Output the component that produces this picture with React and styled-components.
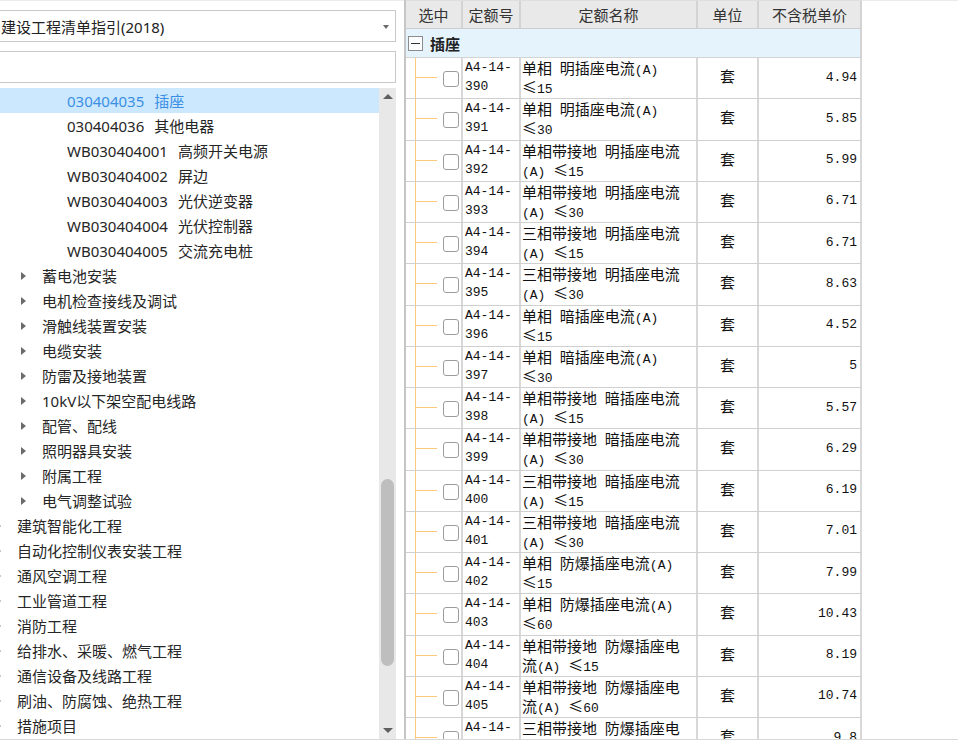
import React from 'react';
import styled, { createGlobalStyle } from 'styled-components';

const GlobalStyle = createGlobalStyle`
  html, body { margin: 0; padding: 0; background: #fff; }
  body { overflow: hidden; font-family: "Noto Sans", "Noto Sans CJK SC", sans-serif; }
  #root { width: 958px; height: 743px; }
  * { box-sizing: border-box; }
`;

const CJK = '"Noto Sans CJK SC", "Noto Sans", sans-serif';
const MONO = '"Liberation Mono", "Noto Sans CJK SC", monospace';
const COLS = '57px 58px 177px 61px 103px';
const GUIDE = '#fbc97e';

const Page = styled.div`
  width: 958px;
  height: 743px;
  overflow: hidden;
  background: #fff;
`;

const Frame = styled.div`
  display: flex;
  height: 740px;
  border-bottom: 1px solid #d9d9d9;
  overflow: hidden;
`;

const LeftPanel = styled.div`
  flex: 0 0 404px;
  display: flex;
  flex-direction: column;
  overflow: hidden;
  border-top: 1px solid #ebebeb;
`;

const Field = styled.div`
  flex: 0 0 32px;
  width: 398px;
  margin: 9px 0 0 -2px;
  border: 1px solid #c9c9c9;
  background: #fff;
  display: flex;
  align-items: center;
  justify-content: space-between;
  padding: 0 6px 0 2px;
  font-family: "Noto Sans", "Noto Sans CJK SC", sans-serif;
  font-size: 15px;
  color: #222;
`;

const ComboArrow = styled.span`
  width: 0;
  height: 0;
  border-left: 3.5px solid transparent;
  border-right: 3.5px solid transparent;
  border-top: 4px solid #6a6a6a;
  margin-top: 1px;
`;

const TreeWrap = styled.div`
  flex: 1;
  margin-top: 5px;
  display: flex;
  overflow: hidden;
  padding-right: 8px;
`;

const TreeViewport = styled.div`
  flex: 0 0 379px;
  overflow: hidden;
`;

const TreeList = styled.div`
  margin-left: -8px;
  width: 387px;
`;

const TreeRow = styled.div`
  height: 25px;
  display: flex;
  align-items: center;
  padding-left: ${(p) => (p.$depth - 1) * 25}px;
  background: ${(p) => (p.$selected ? '#cce8ff' : 'transparent')};
  color: ${(p) => (p.$selected ? '#3b8fe3' : '#262626')};
  font-family: "Noto Sans", "Noto Sans CJK SC", sans-serif;
  font-size: 15px;
  white-space: nowrap;
`;

const Expander = styled.span`
  flex: 0 0 25px;
  height: 25px;
  display: flex;
  align-items: center;
  padding-left: 4px;
  &::before {
    content: '';
    display: ${(p) => (p.$leaf ? 'none' : 'block')};
    width: 0;
    height: 0;
    border-top: 4px solid transparent;
    border-bottom: 4px solid transparent;
    border-left: 5px solid #6b6b6b;
  }
`;

const ItemCode = styled.span`
  margin-right: 10px;
`;

const Scrollbar = styled.div`
  flex: 0 0 17px;
  display: flex;
  flex-direction: column;
  background: #e8e8e8;
`;

const ScrollBtn = styled.div`
  flex: 0 0 17px;
  display: flex;
  align-items: center;
  justify-content: center;
  &::before {
    content: '';
    width: 0;
    height: 0;
    border-left: 5px solid transparent;
    border-right: 5px solid transparent;
    ${(p) => (p.$down ? 'border-top: 5px solid #5f5f5f;' : 'border-bottom: 5px solid #5f5f5f;')}
  }
`;

const Track = styled.div`
  flex: 1;
  display: flex;
  flex-direction: column;
  align-items: center;
`;

const Thumb = styled.div`
  width: 13px;
  border-radius: 7px;
  background: #bebebe;
`;

const TablePanel = styled.div`
  flex: 0 0 458px;
  border-left: 2px solid #c6c6c6;
  overflow: hidden;
  display: flex;
  flex-direction: column;
`;

const Filler = styled.div`
  flex: 1;
  border-top: 1px solid #ebebeb;
`;

const HeaderRow = styled.div`
  display: grid;
  grid-template-columns: ${COLS};
  flex: 0 0 29px;
  background: #e9e9e9;
  border-top: 1px solid #dedede;
  border-bottom: 1px solid #cdcdcd;
`;

const HeaderCell = styled.div`
  display: flex;
  align-items: center;
  justify-content: center;
  border-right: 2px solid #d3d3d3;
  font-family: ${CJK};
  font-size: 15px;
  color: #333;
`;

const GroupRow = styled.div`
  flex: 0 0 29px;
  display: flex;
  align-items: center;
  padding-left: 2px;
  background: #e5f3fd;
  border-bottom: 1px solid #d3d3d3;
  border-right: 2px solid #d3d3d3;
  font-family: ${CJK};
  font-size: 15px;
  font-weight: 700;
  color: #222;
`;

const MinusBox = styled.span`
  width: 15px;
  height: 15px;
  border: 1px solid #8c8c8c;
  background: #fbfdff;
  display: flex;
  align-items: center;
  justify-content: center;
  margin-right: 7px;
  &::before {
    content: '';
    width: 9px;
    height: 1px;
    background: #333;
  }
`;

const Body = styled.div`
  flex: 1;
  overflow: hidden;
`;

const DataRow = styled.div`
  display: grid;
  grid-template-columns: ${COLS};
  height: 41.25px;
  border-bottom: 1px solid #d0d0d0;
`;

const Cell = styled.div`
  display: flex;
  align-items: center;
  padding-bottom: 2px;
  border-right: 2px solid #d8d8d8;
  min-width: 0;
  color: #111;
`;

const SelectCell = styled(Cell)`
  align-items: stretch;
  padding: 0 0 0 9px;
`;

const Guide = styled.span`
  flex: 0 0 21px;
  position: relative;
  border-left: 1px solid ${GUIDE};
  &::after {
    content: '';
    position: absolute;
    left: 0;
    top: 19px;
    width: 21px;
    height: 1px;
    background: ${GUIDE};
  }
`;

const CheckBox = styled.span`
  align-self: center;
  width: 16px;
  height: 16px;
  margin: 2px 0 0 7px;
  border: 1px solid #9c9c9c;
  border-radius: 3px;
  background: #fff;
`;

const CodeCell = styled(Cell)`
  padding-left: 2px;
  padding-right: 1px;
  font-family: ${MONO};
  font-size: 13px;
  line-height: 19px;
`;

const NameCell = styled(Cell)`
  padding-left: 1px;
  padding-right: 6px;
  font-family: ${CJK};
  font-size: 15px;
  line-height: 19px;
`;

const NameText = styled.span`
  display: block;
  line-height: 19px;
`;

const Latin = styled.span`
  font-family: ${MONO};
  font-size: 13px;
  line-height: 13px;
`;

const UnitCell = styled(Cell)`
  justify-content: center;
  padding-bottom: 5px;
  font-family: ${CJK};
  font-size: 15px;
`;

const PriceCell = styled(Cell)`
  justify-content: flex-end;
  padding-right: 3px;
  font-family: ${MONO};
  font-size: 13px;
`;

const treeItems = [
  { depth: 3, code: '030404035', name: '插座', selected: true },
  { depth: 3, code: '030404036', name: '其他电器' },
  { depth: 3, code: 'WB030404001', name: '高频开关电源' },
  { depth: 3, code: 'WB030404002', name: '屏边' },
  { depth: 3, code: 'WB030404003', name: '光伏逆变器' },
  { depth: 3, code: 'WB030404004', name: '光伏控制器' },
  { depth: 3, code: 'WB030404005', name: '交流充电桩' },
  { depth: 2, name: '蓄电池安装' },
  { depth: 2, name: '电机检查接线及调试' },
  { depth: 2, name: '滑触线装置安装' },
  { depth: 2, name: '电缆安装' },
  { depth: 2, name: '防雷及接地装置' },
  { depth: 2, name: '10kV以下架空配电线路' },
  { depth: 2, name: '配管、配线' },
  { depth: 2, name: '照明器具安装' },
  { depth: 2, name: '附属工程' },
  { depth: 2, name: '电气调整试验' },
  { depth: 1, name: '建筑智能化工程' },
  { depth: 1, name: '自动化控制仪表安装工程' },
  { depth: 1, name: '通风空调工程' },
  { depth: 1, name: '工业管道工程' },
  { depth: 1, name: '消防工程' },
  { depth: 1, name: '给排水、采暖、燃气工程' },
  { depth: 1, name: '通信设备及线路工程' },
  { depth: 1, name: '刷油、防腐蚀、绝热工程' },
  { depth: 1, name: '措施项目' },
];

const quotas = [
  ['390', '单相 明插座电流(A) ≤15', '4.94'],
  ['391', '单相 明插座电流(A) ≤30', '5.85'],
  ['392', '单相带接地 明插座电流(A) ≤15', '5.99'],
  ['393', '单相带接地 明插座电流(A) ≤30', '6.71'],
  ['394', '三相带接地 明插座电流(A) ≤15', '6.71'],
  ['395', '三相带接地 明插座电流(A) ≤30', '8.63'],
  ['396', '单相 暗插座电流(A) ≤15', '4.52'],
  ['397', '单相 暗插座电流(A) ≤30', '5'],
  ['398', '单相带接地 暗插座电流(A) ≤15', '5.57'],
  ['399', '单相带接地 暗插座电流(A) ≤30', '6.29'],
  ['400', '三相带接地 暗插座电流(A) ≤15', '6.19'],
  ['401', '三相带接地 暗插座电流(A) ≤30', '7.01'],
  ['402', '单相 防爆插座电流(A) ≤15', '7.99'],
  ['403', '单相 防爆插座电流(A) ≤60', '10.43'],
  ['404', '单相带接地 防爆插座电流(A) ≤15', '8.19'],
  ['405', '单相带接地 防爆插座电流(A) ≤60', '10.74'],
  ['406', '三相带接地 防爆插座电流(A) ≤15', '9.8'],
];

function MixedText({ text }) {
  const parts = text.split(/([\x20-\x7E]+)/).filter(Boolean);
  return (
    <NameText>
      {parts.map((p, i) => (/^[\x20-\x7E]+$/.test(p) ? <Latin key={i}>{p}</Latin> : <React.Fragment key={i}>{p}</React.Fragment>))}
    </NameText>
  );
}

export default function App() {
  return (
    <Page>
      <GlobalStyle />
      <Frame>
        <LeftPanel>
          <Field>
            <span>建设工程清单指引(2018)</span>
            <ComboArrow />
          </Field>
          <Field />
          <TreeWrap>
            <TreeViewport>
              <TreeList>
                {treeItems.map((it, i) => (
                  <TreeRow key={i} $depth={it.depth} $selected={it.selected}>
                    <Expander $leaf={it.depth === 3} />
                    {it.code && <ItemCode>{it.code}</ItemCode>}
                    <span>{it.name}</span>
                  </TreeRow>
                ))}
              </TreeList>
            </TreeViewport>
            <Scrollbar>
              <ScrollBtn />
              <Track>
                <Thumb style={{ marginTop: 374, height: 187 }} />
              </Track>
              <ScrollBtn $down />
            </Scrollbar>
          </TreeWrap>
        </LeftPanel>
        <TablePanel>
          <HeaderRow>
            <HeaderCell>选中</HeaderCell>
            <HeaderCell>定额号</HeaderCell>
            <HeaderCell>定额名称</HeaderCell>
            <HeaderCell>单位</HeaderCell>
            <HeaderCell>不含税单价</HeaderCell>
          </HeaderRow>
          <GroupRow>
            <MinusBox />
            插座
          </GroupRow>
          <Body>
            {quotas.map(([no, name, price]) => (
              <DataRow key={no}>
                <SelectCell>
                  <Guide />
                  <CheckBox />
                </SelectCell>
                <CodeCell>
                  <span>
                    A4-14-<wbr />
                    {no}
                  </span>
                </CodeCell>
                <NameCell>
                  <MixedText text={name} />
                </NameCell>
                <UnitCell>套</UnitCell>
                <PriceCell>{price}</PriceCell>
              </DataRow>
            ))}
          </Body>
        </TablePanel>
        <Filler />
      </Frame>
    </Page>
  );
}
